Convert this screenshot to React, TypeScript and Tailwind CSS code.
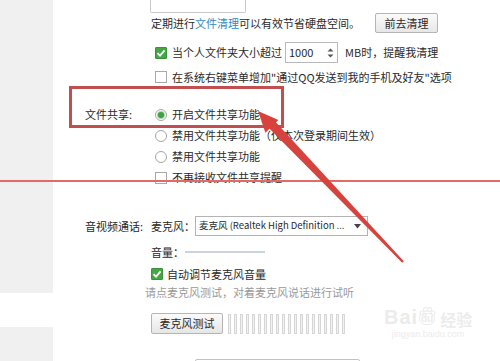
import React from 'react';

const FONT = "font-['Noto_Sans_CJK_SC','Liberation_Sans',sans-serif]";

function Check({ checked }: { checked?: boolean }) {
  if (checked) {
    return (
      <span className="w-[12px] h-[12px] shrink-0 rounded-[1px] bg-[#43a743] border border-[#3a933a] flex items-center justify-center">
        <svg width="10" height="10" viewBox="0 0 10 10">
          <path d="M1.5 5.2 L4 7.6 L8.6 2.4" fill="none" stroke="#ffffff" strokeWidth="1.8" />
        </svg>
      </span>
    );
  }
  return <span className="w-[12px] h-[12px] shrink-0 bg-white border border-[#a9a9a9]" />;
}

function Radio({ checked }: { checked?: boolean }) {
  return (
    <span className="w-[12px] h-[12px] shrink-0 rounded-full bg-white border border-[#a5a5a5] flex items-center justify-center">
      {checked && <span className="w-[6px] h-[6px] rounded-full bg-[#3f9f43] shadow-[0_0_0_1px_#a8d8a8]" />}
    </span>
  );
}

function Row({ className, children }: { className: string; children: React.ReactNode }) {
  return <div className={`flex items-center leading-none shrink-0 ${className}`}>{children}</div>;
}

export default function App() {
  const bars = Array.from({ length: 20 });
  return (
    <div className={`relative w-[500px] h-[361px] overflow-hidden bg-white flex text-[11px] text-[#2a2a2a] ${FONT}`}>
      {/* Left sidebar */}
      <div className="w-[53px] flex flex-col shrink-0">
        <div className="h-[293px] shrink-0 bg-[#f0f0f0]" />
        <div className="h-[34px] shrink-0 bg-white" />
        <div className="flex-1 bg-[#f0f0f0]" />
      </div>

      {/* Main settings */}
      <div className="flex-1 min-w-0 pl-[32px]">
        {/* top input box, mostly scrolled off */}
        <div className="h-[13px] pl-[65px]">
          <div className="w-[96px] h-[13px] border-x border-b border-[#c9c9c9] rounded-b-[2px]" />
        </div>

        <Row className="h-[20px] pl-[66px]">
          <span className="w-[224px] whitespace-nowrap">
            定期进行<span className="text-[#2f8ac6]">文件清理</span>可以有效节省硬盘空间。
          </span>
          <button className="w-[63px] h-[20px] border border-[#b5b5b5] rounded-[2px] bg-gradient-to-b from-[#fbfbfb] to-[#e7e7e7] text-[11px] text-[#2a2a2a]">
            前去清理
          </button>
        </Row>

        <Row className="mt-[9px] h-[21px] pl-[70px]">
          <Check checked />
          <span className="ml-[5px] w-[113px] whitespace-nowrap">当个人文件夹大小超过</span>
          <span className="w-[53px] h-[21px] border border-[#b9b9b9] bg-white flex items-center pl-[3px] pr-[3px]">
            <span className="flex-1">1000</span>
            <svg width="7" height="12" viewBox="0 0 7 12">
              <path d="M0.5 4.5 L3.5 1.5 L6.5 4.5 Z" fill="#555" />
              <path d="M0.5 7.5 L3.5 10.5 L6.5 7.5 Z" fill="#555" />
            </svg>
          </span>
          <span className="ml-[7px] whitespace-nowrap">MB时，提醒我清理</span>
        </Row>

        <Row className="mt-[4px] h-[20px] pl-[70px]">
          <Check />
          <span className="ml-[5px] whitespace-nowrap">在系统右键菜单增加"通过QQ发送到我的手机及好友"选项</span>
        </Row>

        {/* File sharing */}
        <div className="mt-[17px] flex">
          <div className="w-[66px] h-[21px] flex items-center leading-none">文件共享:</div>
          <div className="flex flex-col pl-[4px]">
            <Row className="h-[21px]">
              <Radio checked />
              <span className="ml-[5px] whitespace-nowrap">开启文件共享功能</span>
            </Row>
            <Row className="h-[21px]">
              <Radio />
              <span className="ml-[5px] whitespace-nowrap">禁用文件共享功能（仅本次登录期间生效）</span>
            </Row>
            <Row className="h-[21px]">
              <Radio />
              <span className="ml-[5px] whitespace-nowrap">禁用文件共享功能</span>
            </Row>
            <Row className="h-[21px]">
              <Check />
              <span className="ml-[5px] whitespace-nowrap">不再接收文件共享提醒</span>
            </Row>
          </div>
        </div>

        {/* Audio / video */}
        <div className="mt-[28px] flex">
          <div className="w-[66px] h-[20px] flex items-center leading-none whitespace-nowrap">音视频通话:</div>
          <div className="flex flex-col">
            <Row className="h-[20px]">
              <span className="w-[44px] whitespace-nowrap">麦克风：</span>
              <span className="w-[173px] h-[20px] border border-[#b3b3b3] bg-white flex items-center pl-[3px] pr-[6px] text-[9.5px]">
                <span className="flex-1 whitespace-nowrap">麦克风 (Realtek High Definition ...</span>
                <svg width="7" height="5" viewBox="0 0 7 5">
                  <path d="M0 0 L7 0 L3.5 4.5 Z" fill="#444" />
                </svg>
              </span>
            </Row>
            <Row className="mt-[6px] h-[20px]">
              <span className="w-[34px] whitespace-nowrap">音量：</span>
              <span className="w-[80px] h-[2px] bg-[#c9d3dc]" />
            </Row>
            <Row className="mt-[2px] h-[20px]">
              <Check checked />
              <span className="ml-[4px] whitespace-nowrap">自动调节麦克风音量</span>
            </Row>
            <Row className="h-[17px] -ml-[6px] text-[#9a9a9a]">
              <span className="whitespace-nowrap">请点麦克风测试，对着麦克风说话进行试听</span>
            </Row>
            <Row className="mt-[12px] h-[21px]">
              <button className="w-[72px] h-[21px] border border-[#b5b5b5] rounded-[2px] bg-gradient-to-b from-[#fbfbfb] to-[#e6e6e6] text-[11px] text-[#2a2a2a]">
                麦克风测试
              </button>
              <span className="ml-[5px] h-[20px] flex gap-[3px]">
                {bars.map((_, i) => (
                  <span key={i} className="w-[3px] h-[20px] bg-[#f1f1f1] border border-[#d6d6d6]" />
                ))}
              </span>
            </Row>
            <div className="mt-[25px] ml-[44px] w-[165px] h-[20px] shrink-0 border border-[#c2c2c2] rounded-[2px]" />
          </div>
        </div>
      </div>

      {/* Annotations drawn over the screenshot */}
      <div className="absolute left-[69px] top-[86px] w-[215px] h-[42px] border-[3px] border-[#c24f4f]" />
      <div className="absolute left-0 top-[180px] w-[500px] h-[2px] bg-[#e46a6a]" />
      <svg className="absolute left-0 top-0" width="500" height="361" viewBox="0 0 500 361">
        <polygon points="258,111 265.4,132.7 278.4,120.1" fill="#d8423c" />
        <polygon points="268.6,127.8 275.2,121.4 403.8,261.2 402.2,262.8" fill="#d8423c" />
      </svg>

      {/* Watermark */}
      <div className="absolute left-[384px] top-[307px] flex flex-col items-center text-[#ececec] leading-none">
        <div className="flex items-end">
          <span className="text-[20px] font-bold font-['Liberation_Sans',sans-serif] tracking-[1px]">Bai</span>
          <span className="relative w-[18px] h-[20px] flex items-end justify-center">
            <svg className="absolute top-0 left-0" width="18" height="10" viewBox="0 0 18 10">
              <circle cx="4" cy="6" r="2" fill="none" stroke="#ececec" strokeWidth="1.2" />
              <circle cx="7.5" cy="2.5" r="2" fill="none" stroke="#ececec" strokeWidth="1.2" />
              <circle cx="11.5" cy="2.5" r="2" fill="none" stroke="#ececec" strokeWidth="1.2" />
              <circle cx="15" cy="6" r="2" fill="none" stroke="#ececec" strokeWidth="1.2" />
            </svg>
            <span className="text-[10px] font-bold font-['Liberation_Sans',sans-serif] mb-[2px] border border-[#ececec] rounded-full px-[1px]">du</span>
          </span>
          <span className="ml-[4px] text-[16px] font-bold">经验</span>
        </div>
        <span className="mt-[3px] text-[9px] font-['Liberation_Sans',sans-serif]">jingyan.baidu.com</span>
      </div>
    </div>
  );
}
